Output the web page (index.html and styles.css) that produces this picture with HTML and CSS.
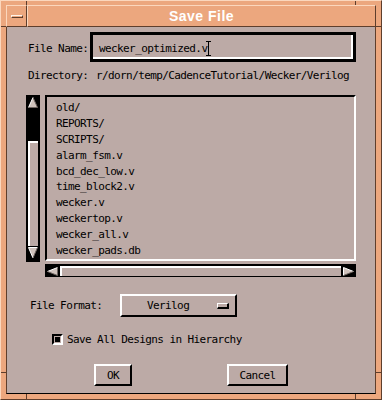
FILE: index.html
```html
<!DOCTYPE html>
<html lang="en">
<head>
    <meta charset="UTF-8">
    <title>Save File</title>
    <link rel="stylesheet" href="styles.css">
</head>
<body>
    <div class="window">
        <div class="titlebar">
            <div class="menu-btn"><span class="menu-glyph"></span></div>
            <div class="title">Save File</div>
        </div>
        <div class="panel">
            <div class="name-row">
                <span class="label">File Name:</span>
                <div class="text-field">
                    <span>wecker_optimized.v</span>
                    <svg class="ibeam" width="5" height="15" viewBox="0 0 5 15">
                        <path d="M0 0.5H5M0 14.5H5M2.5 0V15" stroke="#000" stroke-width="1" fill="none"/>
                    </svg>
                </div>
            </div>
            <div class="dir-row">
                <span class="label">Directory:</span>
                <span class="dir-path">r/dorn/temp/CadenceTutorial/Wecker/Verilog</span>
            </div>

            <div class="list-area">
                <div class="vbar">
                    <svg class="arrow" width="10" height="11" viewBox="0 0 10 11">
                        <polygon points="5,0.5 9.5,10.5 0.5,10.5" fill="#cfc2bc"/>
                        <polyline points="0.5,10.5 5,0.5" stroke="#fff" fill="none"/>
                        <polyline points="5,0.5 9.5,10.5 0.5,10.5" stroke="#6e6460" fill="none"/>
                    </svg>
                    <div class="trough"></div>
                    <div class="vthumb"></div>
                    <svg class="arrow" width="10" height="12" viewBox="0 0 10 12">
                        <polygon points="0.5,0.5 9.5,0.5 5,11" fill="#cfc2bc"/>
                        <polyline points="9.5,0.5 0.5,0.5 5,11" stroke="#fff" fill="none"/>
                        <polyline points="9.5,0.5 5,11" stroke="#6e6460" fill="none"/>
                    </svg>
                </div>
                <div class="list">
                    <ul>
                        <li>old/</li>
                        <li>REPORTS/</li>
                        <li>SCRIPTS/</li>
                        <li>alarm_fsm.v</li>
                        <li>bcd_dec_low.v</li>
                        <li>time_block2.v</li>
                        <li>wecker.v</li>
                        <li>weckertop.v</li>
                        <li>wecker_all.v</li>
                        <li>wecker_pads.db</li>
                    </ul>
                </div>
                <div class="hbar">
                    <svg class="arrow" width="11" height="9" viewBox="0 0 11 9">
                        <polygon points="0.5,4.5 10.5,0.5 10.5,8.5" fill="#cfc2bc"/>
                        <polyline points="10.5,0.5 0.5,4.5" stroke="#fff" fill="none"/>
                        <polyline points="0.5,4.5 10.5,8.5 10.5,0.5" stroke="#6e6460" fill="none"/>
                    </svg>
                    <div class="hthumb"></div>
                    <svg class="arrow" width="11" height="9" viewBox="0 0 11 9">
                        <polygon points="0.5,0.5 10.5,4.5 0.5,8.5" fill="#cfc2bc"/>
                        <polyline points="0.5,8.5 0.5,0.5 10.5,4.5" stroke="#fff" fill="none"/>
                        <polyline points="10.5,4.5 0.5,8.5" stroke="#6e6460" fill="none"/>
                    </svg>
                </div>
            </div>

            <div class="format-row">
                <span class="label">File Format:</span>
                <div class="option">
                    <span>Verilog</span>
                    <span class="option-mark"></span>
                </div>
            </div>

            <div class="check-row">
                <span class="checkbox"><span class="check-fill"></span></span>
                <span>Save All Designs in Hierarchy</span>
            </div>

            <div class="button-row">
                <div class="push ok">OK</div>
                <div class="push cancel">Cancel</div>
            </div>
        </div>
    </div>
</body>
</html>
```

FILE: styles.css
```css
body {
    margin: 0;
    padding: 0;
    background: #bcaaa6;
    font-family: 'DejaVu Sans Mono', 'Liberation Mono', monospace;
    font-size: 11px;
    letter-spacing: -0.6px;
    color: #000;
}

/* Window frame, with the resize-corner grooves */
.window {
    width: 382px;
    height: 400px;
    box-sizing: border-box;
    padding: 4px 5px 5px 5px;
    background:
        linear-gradient(#5e3e2c, #5e3e2c) 25px 0 / 1px 100% no-repeat,
        linear-gradient(#5e3e2c, #5e3e2c) 354px 0 / 1px 100% no-repeat,
        linear-gradient(#5e3e2c, #5e3e2c) 0 25px / 100% 1px no-repeat,
        linear-gradient(#5e3e2c, #5e3e2c) 0 371px / 100% 1px no-repeat,
        #eca77e;
    border-top: 1px solid #fbd7bd;
    border-left: 1px solid #fbd7bd;
    border-right: 1px solid #5e3e2c;
    border-bottom: 1px solid #5e3e2c;
    display: flex;
    flex-direction: column;
}

.titlebar {
    height: 22px;
    display: flex;
    background: #eca77e;
}

.menu-btn {
    width: 21px;
    box-sizing: border-box;
    border-top: 1px solid #fbd7bd;
    border-left: 1px solid #fbd7bd;
    border-right: 1px solid #5e3e2c;
    border-bottom: 1px solid #5e3e2c;
    display: flex;
    align-items: center;
    justify-content: center;
}

.menu-glyph {
    width: 12px;
    height: 3px;
    box-sizing: border-box;
    border-top: 1px solid #fff3e8;
    border-left: 1px solid #fff3e8;
    border-right: 1px solid #5e3e2c;
    border-bottom: 1px solid #5e3e2c;
}

.title {
    flex: 1;
    box-sizing: border-box;
    border-top: 1px solid #fbd7bd;
    border-left: 1px solid #fbd7bd;
    border-right: 1px solid #5e3e2c;
    border-bottom: 1px solid #5e3e2c;
    font-family: 'Liberation Sans', Arial, sans-serif;
    font-weight: bold;
    font-size: 14px;
    letter-spacing: 0.5px;
    color: #fff;
    text-align: center;
    line-height: 20px;
}

/* Dialog body */
.panel {
    flex: 1;
    background: #bcaaa6;
    border-left: 1px solid #5e3e2c;
    border-right: 1px solid #5e3e2c;
    border-bottom: 1px solid #000;
    display: flex;
    flex-direction: column;
}

.name-row {
    display: flex;
    align-items: center;
    margin-top: 5px;
    padding-left: 21px;
    height: 30px;
}

.name-row .label {
    width: 62px;
    padding-top: 3px;
}

.text-field {
    width: 266px;
    height: 30px;
    box-sizing: border-box;
    border: 3px solid #000;
    box-shadow: inset -2px -2px 0 #fff;
    display: flex;
    align-items: center;
    padding-left: 6px;
    padding-top: 2px;
}

.ibeam {
    margin-left: -1px;
}

.dir-row {
    display: flex;
    margin-top: 7px;
    padding-left: 21px;
    line-height: 14px;
}

.dir-row .label {
    width: 68px;
}

/* File list */
.list-area {
    display: grid;
    grid-template-columns: 14px 311px;
    grid-template-rows: 167px 13px;
    column-gap: 5px;
    row-gap: 2px;
    margin-top: 12px;
    margin-left: 19px;
}

.vbar {
    background: #000;
    display: flex;
    flex-direction: column;
    align-items: center;
    padding: 2px 0 3px 0;
    box-sizing: border-box;
}

.trough {
    height: 33px;
}

.vthumb {
    width: 10px;
    height: 105px;
    margin-left: -1px;
    box-sizing: border-box;
    background: #bcaaa6;
    border-top: 2px solid #fff;
    border-left: 2px solid #fff;
}

.vbar .arrow:last-child {
    margin-top: 1px;
}

.list {
    height: 166px;
    box-sizing: border-box;
    border-top: 2px solid #000;
    border-left: 2px solid #000;
    border-right: 2px solid #fff;
    border-bottom: 2px solid #fff;
}

.list ul {
    list-style: none;
    margin: 0;
    padding: 3px 0 0 9px;
}

.list li {
    line-height: 15.9px;
    height: 15.9px;
}

.hbar {
    grid-column: 2;
    background: #000;
    display: flex;
    align-items: center;
    padding: 2px 2px 1px 2px;
    box-sizing: border-box;
}

.hthumb {
    flex: 1;
    height: 10px;
    margin: 0 2px;
    box-sizing: border-box;
    background: #bcaaa6;
    border-top: 2px solid #fff;
    border-left: 2px solid #fff;
}

/* Format option */
.format-row {
    display: flex;
    align-items: center;
    margin-top: 17px;
    padding-left: 23px;
}

.format-row .label {
    width: 90px;
}

.option {
    width: 117px;
    height: 23px;
    box-sizing: border-box;
    border-top: 2px solid #fff;
    border-left: 2px solid #fff;
    border-right: 2px solid #000;
    border-bottom: 2px solid #000;
    display: flex;
    align-items: center;
    padding-left: 25px;
    padding-right: 6px;
}

.option-mark {
    margin-left: auto;
    width: 12px;
    height: 6px;
    box-sizing: border-box;
    border-top: 1px solid #fff;
    border-left: 1px solid #fff;
    border-right: 2px solid #000;
    border-bottom: 2px solid #000;
}

/* Toggle */
.check-row {
    display: flex;
    align-items: center;
    margin-top: 17px;
    padding-left: 45px;
    height: 11px;
}

.checkbox {
    width: 11px;
    height: 11px;
    box-sizing: border-box;
    border-top: 2px solid #000;
    border-left: 2px solid #000;
    border-right: 2px solid #fff;
    border-bottom: 2px solid #fff;
    padding: 1px;
    margin-right: 4px;
}

.check-fill {
    display: block;
    width: 5px;
    height: 5px;
    background: #000;
}

/* Push buttons */
.button-row {
    display: flex;
    margin-top: 19px;
    padding-left: 87px;
}

.push {
    height: 22px;
    box-sizing: border-box;
    border-top: 2px solid #fff;
    border-left: 2px solid #fff;
    border-right: 2px solid #000;
    border-bottom: 2px solid #000;
    display: flex;
    align-items: center;
    justify-content: center;
}

.ok {
    width: 38px;
}

.cancel {
    width: 61px;
    margin-left: 95px;
}
```
